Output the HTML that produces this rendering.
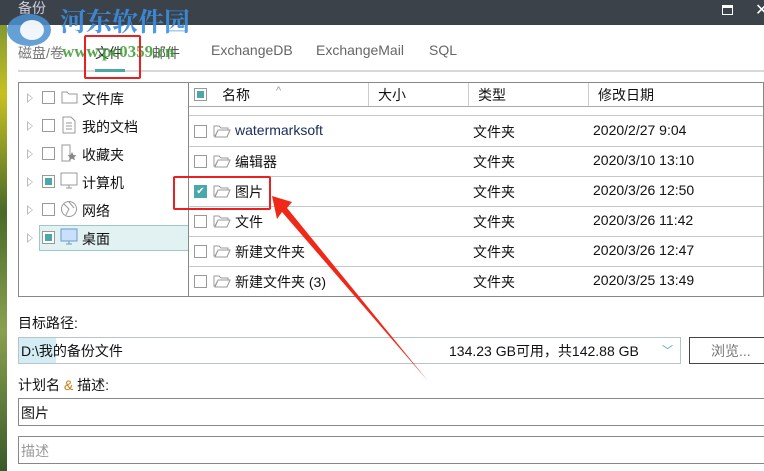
<!DOCTYPE html>
<html><head><meta charset="utf-8"><style>
*{margin:0;padding:0;box-sizing:border-box}
body{width:764px;height:471px;overflow:hidden;background:#fff;position:relative;font-family:"Liberation Sans","Noto Sans CJK SC",sans-serif;font-size:14px;color:#111}
.a{position:absolute}
.cb{position:absolute;width:13px;height:13px;border:1px solid #999;background:#fff}
.cb.p::after{content:"";position:absolute;left:2px;top:2px;width:7px;height:7px;background:#4aa8a8}
.tri{position:absolute;width:0;height:0;border-left:6px solid #bbb;border-top:5px solid transparent;border-bottom:5px solid transparent}
.tri::after{content:"";position:absolute;left:-5px;top:-3px;border-left:4px solid #fff;border-top:3px solid transparent;border-bottom:3px solid transparent}
.t{position:absolute;white-space:nowrap}
.hl{position:absolute;height:1px;background:#c8c8c8}
</style></head><body>
<div class="a" style="left:0;top:0;width:7px;height:471px;background:linear-gradient(#6a8a3a,#c8c020 20%,#4a6a2a 45%,#8aa050 70%,#3a5a2a)"></div>
<div class="a" style="left:0;top:0;width:764px;height:25px;background:#3c4249"></div>
<div class="t" style="left:18px;top:-2px;color:#ccd;font-size:14px">备份</div>
<div class="a" style="left:722px;top:5px;width:11px;height:10px;border:1.5px solid #fff;border-top-width:3px"></div>
<div class="t" style="left:755px;top:0;color:#fff;font-size:16px">✕</div>
<svg class="a" style="left:4px;top:8px" width="50" height="40"><ellipse cx="25" cy="22" rx="22" ry="16" fill="#4a90d0" opacity=".85"/><ellipse cx="28" cy="22" rx="12" ry="10" fill="#fff" opacity=".9"/></svg>
<div class="t" style="left:60px;top:2px;color:#3a8ee0;font-size:26px;font-weight:bold;font-family:'Noto Serif CJK SC',serif;opacity:.9">河东软件园</div>
<div class="t" style="left:18px;top:43px;color:#777">磁盘/卷</div>
<div class="t" style="left:95px;top:43px;color:#333">文件</div>
<div class="t" style="left:152px;top:43px;color:#555">邮件</div>
<div class="t" style="left:62px;top:42px;color:#3a9a30;font-weight:bold;font-size:17px;font-family:'Liberation Serif',serif;opacity:.85">www.pc0359.cn</div>
<div class="t" style="left:211px;top:42px;color:#666">ExchangeDB</div>
<div class="t" style="left:316px;top:42px;color:#666">ExchangeMail</div>
<div class="t" style="left:429px;top:42px;color:#666">SQL</div>
<div class="a" style="left:18px;top:70px;width:746px;height:2px;background:#d8d8d8"></div>
<div class="a" style="left:95px;top:69px;width:30px;height:3px;background:#4aa8a8"></div>
<div class="a" style="left:84px;top:35px;width:57px;height:44px;border:2.5px solid #e82020;border-radius:2px"></div>
<div class="a" style="left:18px;top:82px;width:171px;height:215px;border:1px solid #888"></div>
<div class="a" style="left:39px;top:225px;width:150px;height:26px;background:#e2f1f1;border:1px solid #9cc8c8"></div>
<div class="tri" style="left:27px;top:93px"></div><div class="cb" style="left:42px;top:91px"></div><div class="t" style="left:82px;top:89px">文件库</div>
<svg class="a" style="left:61px;top:90px" width="17" height="14"><path d="M1 2h5l2 2h8v9H1z" fill="none" stroke="#999"/></svg>
<div class="tri" style="left:27px;top:121px"></div><div class="cb" style="left:42px;top:119px"></div><div class="t" style="left:82px;top:117px">我的文档</div>
<svg class="a" style="left:62px;top:116px" width="14" height="18"><path d="M1 1h8l4 4v12H1z M4 7h6M4 10h6M4 13h6" fill="none" stroke="#999"/></svg>
<div class="tri" style="left:27px;top:149px"></div><div class="cb" style="left:42px;top:147px"></div><div class="t" style="left:82px;top:145px">收藏夹</div>
<svg class="a" style="left:61px;top:144px" width="16" height="18"><path d="M1 1h8v16H1z" fill="none" stroke="#999"/><path d="M11 8l1.5 3 3 .3-2.3 2 .8 3-3-1.6-3 1.6.8-3-2.3-2 3-.3z" fill="#888"/></svg>
<div class="tri" style="left:27px;top:177px"></div><div class="cb p" style="left:42px;top:175px"></div><div class="t" style="left:82px;top:173px">计算机</div>
<svg class="a" style="left:60px;top:172px" width="18" height="18"><path d="M1 1h16v12H1z M9 13v3M6 16h6" fill="none" stroke="#999"/></svg>
<div class="tri" style="left:27px;top:205px"></div><div class="cb" style="left:42px;top:203px"></div><div class="t" style="left:82px;top:201px">网络</div>
<svg class="a" style="left:60px;top:200px" width="18" height="18"><circle cx="9" cy="9" r="7.5" fill="none" stroke="#999"/><path d="M4 4l5 5-3 6M9 2l5 6" fill="none" stroke="#999"/></svg>
<div class="tri" style="left:27px;top:233px"></div><div class="cb p" style="left:42px;top:231px"></div><div class="t" style="left:82px;top:229px">桌面</div>
<svg class="a" style="left:60px;top:228px" width="18" height="18"><path d="M1 1h16v12H1z" fill="#c8e0fa" stroke="#6a9ad0"/><path d="M9 13v3M6 16h6" stroke="#6a9ad0"/></svg>
<div class="a" style="left:188px;top:82px;width:576px;height:215px;border:1px solid #888"></div>
<div class="a" style="left:189px;top:106px;width:574px;height:1px;background:#aaa"></div>
<div class="a" style="left:368px;top:83px;width:1px;height:23px;background:#ccc"></div>
<div class="a" style="left:468px;top:83px;width:1px;height:23px;background:#ccc"></div>
<div class="a" style="left:588px;top:83px;width:1px;height:23px;background:#ccc"></div>
<div class="cb p" style="left:194px;top:88px"></div>
<div class="t" style="left:222px;top:85px">名称</div><div class="t" style="left:276px;top:85px;color:#999;font-size:11px">^</div>
<div class="t" style="left:378px;top:85px">大小</div><div class="t" style="left:478px;top:85px">类型</div><div class="t" style="left:598px;top:85px">修改日期</div>
<div class="hl" style="left:189px;top:115px;width:574px"></div>
<div class="hl" style="left:189px;top:146px;width:574px"></div>
<div class="hl" style="left:189px;top:176px;width:574px"></div>
<div class="hl" style="left:189px;top:206px;width:574px"></div>
<div class="hl" style="left:189px;top:236px;width:574px"></div>
<div class="hl" style="left:189px;top:266px;width:574px"></div>
<svg width="0" height="0" style="position:absolute"><defs><symbol id="f" viewBox="0 0 18 14"><path d="M1 2h5l2 2h7v2H5L2 12H1zM5 6h12l-3 7H2z" fill="none" stroke="#999"/></symbol></defs></svg>
<div class="cb" style="left:194px;top:125px"></div><svg class="a" style="left:213px;top:124px" width="18" height="14"><use href="#f"/></svg><div class="t" style="left:235px;top:122px;color:#1a2a5a">watermarksoft</div><div class="t" style="left:473px;top:122px">文件夹</div><div class="t" style="left:593px;top:122px">2020/2/27 9:04</div>
<div class="cb" style="left:194px;top:155px"></div><svg class="a" style="left:213px;top:154px" width="18" height="14"><use href="#f"/></svg><div class="t" style="left:235px;top:152px">编辑器</div><div class="t" style="left:473px;top:152px">文件夹</div><div class="t" style="left:593px;top:152px">2020/3/10 13:10</div>
<div class="a" style="left:194px;top:185px;width:13px;height:13px;background:#4aa8a8;color:#fff;font-size:10px;line-height:13px;text-align:center">✔</div><svg class="a" style="left:213px;top:184px" width="18" height="14"><use href="#f"/></svg><div class="t" style="left:235px;top:182px">图片</div><div class="t" style="left:473px;top:182px">文件夹</div><div class="t" style="left:593px;top:182px">2020/3/26 12:50</div>
<div class="cb" style="left:194px;top:215px"></div><svg class="a" style="left:213px;top:214px" width="18" height="14"><use href="#f"/></svg><div class="t" style="left:235px;top:212px">文件</div><div class="t" style="left:473px;top:212px">文件夹</div><div class="t" style="left:593px;top:212px">2020/3/26 11:42</div>
<div class="cb" style="left:194px;top:245px"></div><svg class="a" style="left:213px;top:244px" width="18" height="14"><use href="#f"/></svg><div class="t" style="left:235px;top:242px">新建文件夹</div><div class="t" style="left:473px;top:242px">文件夹</div><div class="t" style="left:593px;top:242px">2020/3/26 12:47</div>
<div class="cb" style="left:194px;top:275px"></div><svg class="a" style="left:213px;top:274px" width="18" height="14"><use href="#f"/></svg><div class="t" style="left:235px;top:272px">新建文件夹 (3)</div><div class="t" style="left:473px;top:272px">文件夹</div><div class="t" style="left:593px;top:272px">2020/3/25 13:49</div>
<div class="a" style="left:173px;top:176px;width:98px;height:34px;border:2.5px solid #e82020;border-radius:2px"></div>
<div class="t" style="left:18px;top:313px">目标路径:</div>
<div class="a" style="left:18px;top:337px;width:663px;height:27px;border:1px solid #b8c4cc"></div>
<div class="a" style="left:19px;top:338px;width:37px;height:25px;background:#d4ecf4"></div>
<div class="t" style="left:21px;top:341px">D:\我的备份文件</div>
<div class="t" style="left:449px;top:341px">134.23 GB可用，共142.88 GB</div>
<div class="t" style="left:662px;top:342px;color:#4aa8a8;font-size:11px">﹀</div>
<div class="a" style="left:689px;top:337px;width:80px;height:27px;border:1px solid #444"></div>
<div class="t" style="left:711px;top:341px;color:#777">浏览...</div>
<div class="t" style="left:18px;top:375px">计划名 <span style="color:#c87a10">&amp;</span> 描述:</div>
<div class="a" style="left:18px;top:398px;width:750px;height:28px;border:1px solid #888"></div>
<div class="t" style="left:21px;top:403px">图片</div>
<div class="a" style="left:18px;top:436px;width:750px;height:28px;border:1px solid #888"></div>
<div class="t" style="left:21px;top:441px;color:#999">描述</div>
<svg class="a" style="left:0;top:0" width="764" height="471"><polygon points="272,196 292,202 287,208 428,381 282,212 277,219" fill="#f02818"/></svg>
</body></html>
